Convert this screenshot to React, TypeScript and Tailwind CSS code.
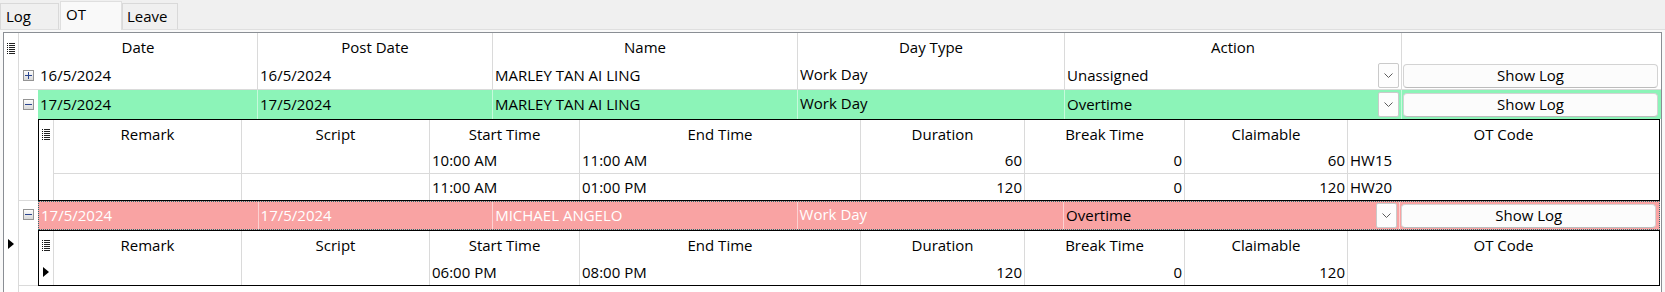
import React from "react";

function ColIcon() {
  return (
    <svg width="8" height="12" viewBox="0 0 8 12" shapeRendering="crispEdges">
      {[0, 2, 4, 6, 8, 10].map((y) => (
        <g key={y}>
          <rect x="0" y={y} width="1" height="1" fill="#111" />
          <rect x="2" y={y} width="6" height="1" fill="#222" />
        </g>
      ))}
    </svg>
  );
}

function ExpBox({ plus }: { plus?: boolean }) {
  return (
    <svg width="11" height="11" viewBox="0 0 11 11" shapeRendering="crispEdges">
      <defs>
        <linearGradient id="expg" x1="0" y1="0" x2="0" y2="1">
          <stop offset="0" stopColor="#ffffff" />
          <stop offset="1" stopColor="#d6d6d6" />
        </linearGradient>
      </defs>
      <rect x="0.5" y="0.5" width="10" height="10" rx="1" fill="url(#expg)" stroke="#949494" />
      <rect x="2" y="5" width="7" height="1" fill="#2a4590" />
      {plus && <rect x="5" y="2" width="1" height="7" fill="#2a4590" />}
    </svg>
  );
}

function Arrow() {
  return (
    <svg width="6" height="10" viewBox="0 0 6 10">
      <polygon points="0,0 6,5 0,10" fill="#000" />
    </svg>
  );
}

function Dropdown() {
  return (
    <div className="w-[21px] h-[25px] mr-[2px] shrink-0 border border-[#cacaca] rounded-[2px] bg-[#fdfdfd] flex items-center justify-center">
      <svg width="9" height="5" viewBox="0 0 9 5">
        <path d="M0.5 0.5 L4.5 4.5 L8.5 0.5" stroke="#5c5c5c" fill="none" strokeWidth="1" />
      </svg>
    </div>
  );
}

function ShowLog() {
  return (
    <div className="ml-[1px] mr-[3px] h-[24px] flex-1 rounded-[4px] border border-[#d3d3d3] border-b-[#bcbcbc] bg-[#fcfcfc] flex items-center justify-center">
      Show Log
    </div>
  );
}

type RowProps = {
  date: string;
  post: string;
  name: string;
  day: string;
  action: string;
  variant: "white" | "green" | "pink";
};

function DataRow({ date, post, name, day, action, variant }: RowProps) {
  const line =
    variant === "white" ? "border-[#dadada]" : "border-white/50";
  const txt = variant === "pink" ? "text-white" : "text-black";
  const cell = `h-full border-r ${line} flex items-center pl-[2px] whitespace-nowrap overflow-hidden`;
  return (
    <>
      <div className={`${cell} w-[220px] ${txt}`}>{date}</div>
      <div className={`${cell} w-[235px] ${txt}`}>{post}</div>
      <div className={`${cell} w-[305px] ${txt}`}>{name}</div>
      <div className={`${cell} w-[267px] pb-[3px] ${txt}`}>{day}</div>
      <div className={`${cell} w-[337px] text-black`}>
        <span className="flex-1">{action}</span>
        <Dropdown />
      </div>
      <div className="h-full w-[259px] flex items-center">
        <ShowLog />
      </div>
    </>
  );
}

const DCLS = [
  "w-[188px]",
  "w-[188px]",
  "w-[150px]",
  "w-[281px]",
  "w-[164px]",
  "w-[160px]",
  "w-[163px]",
  "w-[311px]",
];
const DHEAD = [
  "Remark",
  "Script",
  "Start Time",
  "End Time",
  "Duration",
  "Break Time",
  "Claimable",
  "OT Code",
];

function Detail({ rows, arrow }: { rows: string[][]; arrow?: boolean }) {
  return (
    <div className="w-[1622px] border border-black flex flex-col bg-white">
      <div className="flex h-[28px]">
        <div className="w-[15px] border-r border-[#dadada] flex justify-center pt-[9px]">
          <ColIcon />
        </div>
        {DHEAD.map((h, i) => (
          <div
            key={h}
            className={`${DCLS[i]} h-full ${i < 7 ? "border-r border-[#dadada]" : ""} flex items-center justify-center whitespace-nowrap`}
          >
            {h}
          </div>
        ))}
      </div>
      {rows.map((r, ri) => {
        const last = ri === rows.length - 1;
        return (
          <div key={ri} className="flex h-[26px]">
            <div className="w-[15px] border-r border-[#dadada] flex items-center justify-center">
              {arrow && last ? <Arrow /> : null}
            </div>
            <div className={`flex flex-1 ${last ? "" : "border-b border-[#dadada]"}`}>
              {r.map((v, i) => (
                <div
                  key={i}
                  className={`${DCLS[i]} h-full ${i < 7 ? "border-r border-[#dadada]" : ""} flex items-center whitespace-nowrap ${
                    i >= 4 && i <= 6 ? "justify-end pr-[2px]" : "pl-[2px]"
                  }`}
                >
                  {v}
                </div>
              ))}
            </div>
          </div>
        );
      })}
    </div>
  );
}

function OuterGrid() {
  const hcell = "h-full border-r border-[#dadada] flex items-center justify-center";
  return (
    <div className="w-[1659px] h-[260px] border border-b-0 border-[#8a8e94] bg-white flex">
      {/* indicator column */}
      <div className="w-[15px] h-full border-r border-[#dadada] flex flex-col">
        <div className="h-[29px] flex justify-center pt-[10px]">
          <ColIcon />
        </div>
        <div className="h-[28px]" />
        <div className="h-[111px]" />
        <div className="h-[85px] flex items-center justify-center">
          <Arrow />
        </div>
      </div>
      {/* main column */}
      <div className="w-[1642px] flex flex-col">
        <div className="flex h-[29px]">
          <div className={`${hcell} w-[239px]`}>Date</div>
          <div className={`${hcell} w-[235px]`}>Post Date</div>
          <div className={`${hcell} w-[305px]`}>Name</div>
          <div className={`${hcell} w-[267px]`}>Day Type</div>
          <div className={`${hcell} w-[337px]`}>Action</div>
          <div className="h-full w-[259px]" />
        </div>

        <div className="flex h-[28px] border-b border-[#dadada]">
          <div className="w-[19px] h-full flex items-center pl-[4px]">
            <ExpBox plus />
          </div>
          <DataRow
            date="16/5/2024"
            post="16/5/2024"
            name="MARLEY TAN AI LING"
            day="Work Day"
            action="Unassigned"
            variant="white"
          />
        </div>

        <div className="flex h-[111px]">
          <div className="w-[19px] h-full border-b border-[#dadada] pl-[4px] pt-[9px]">
            <ExpBox />
          </div>
          <div className="w-[1623px] flex flex-col">
            <div className="flex h-[29px] bg-[#8cf4b8]">
              <DataRow
                date="17/5/2024"
                post="17/5/2024"
                name="MARLEY TAN AI LING"
                day="Work Day"
                action="Overtime"
                variant="green"
              />
            </div>
            <Detail
              rows={[
                ["", "", "10:00 AM", "11:00 AM", "60", "0", "60", "HW15"],
                ["", "", "11:00 AM", "01:00 PM", "120", "0", "120", "HW20"],
              ]}
            />
          </div>
        </div>

        <div className="flex h-[85px]">
          <div className="w-[19px] h-full border-b border-[#dadada] pl-[4px] pt-[8px]">
            <ExpBox />
          </div>
          <div className="w-[1623px] flex flex-col">
            <div className="flex h-[29px] w-[1622px] bg-[#f9a3a3] border border-dotted border-[#2f6f73]">
              <DataRow
                date="17/5/2024"
                post="17/5/2024"
                name="MICHAEL ANGELO"
                day="Work Day"
                action="Overtime"
                variant="pink"
              />
            </div>
            <Detail arrow rows={[["", "", "06:00 PM", "08:00 PM", "120", "0", "120", ""]]} />
          </div>
        </div>
      </div>
    </div>
  );
}

function Tabs() {
  return (
    <div className="h-[29px] flex items-end">
      <div className="w-[59px] h-[26px] border border-b-0 border-[#d9d9d9] bg-[#f0f0f0] pl-[5px] pt-[5px]">
        Log
      </div>
      <div className="relative z-10 -mb-px ml-[1px] w-[62px] h-[29px] border border-b-0 border-[#dfdfdf] bg-[#f9f9f9] pl-[5px] pt-[5px]">
        OT
      </div>
      <div className="w-[56px] h-[26px] border border-b-0 border-[#d9d9d9] bg-[#f0f0f0] pl-[4px] pt-[5px]">
        Leave
      </div>
    </div>
  );
}

export default function App() {
  return (
    <div className="w-[1665px] h-[292px] overflow-hidden bg-[#f0f0f0] font-['Open_Sans',sans-serif] text-[15px] leading-none text-black">
      <Tabs />
      <div className="h-[263px] border-t border-[#dfdfdf] bg-[#f9f9f9] pt-[2px] pl-[3px]">
        <OuterGrid />
      </div>
    </div>
  );
}
